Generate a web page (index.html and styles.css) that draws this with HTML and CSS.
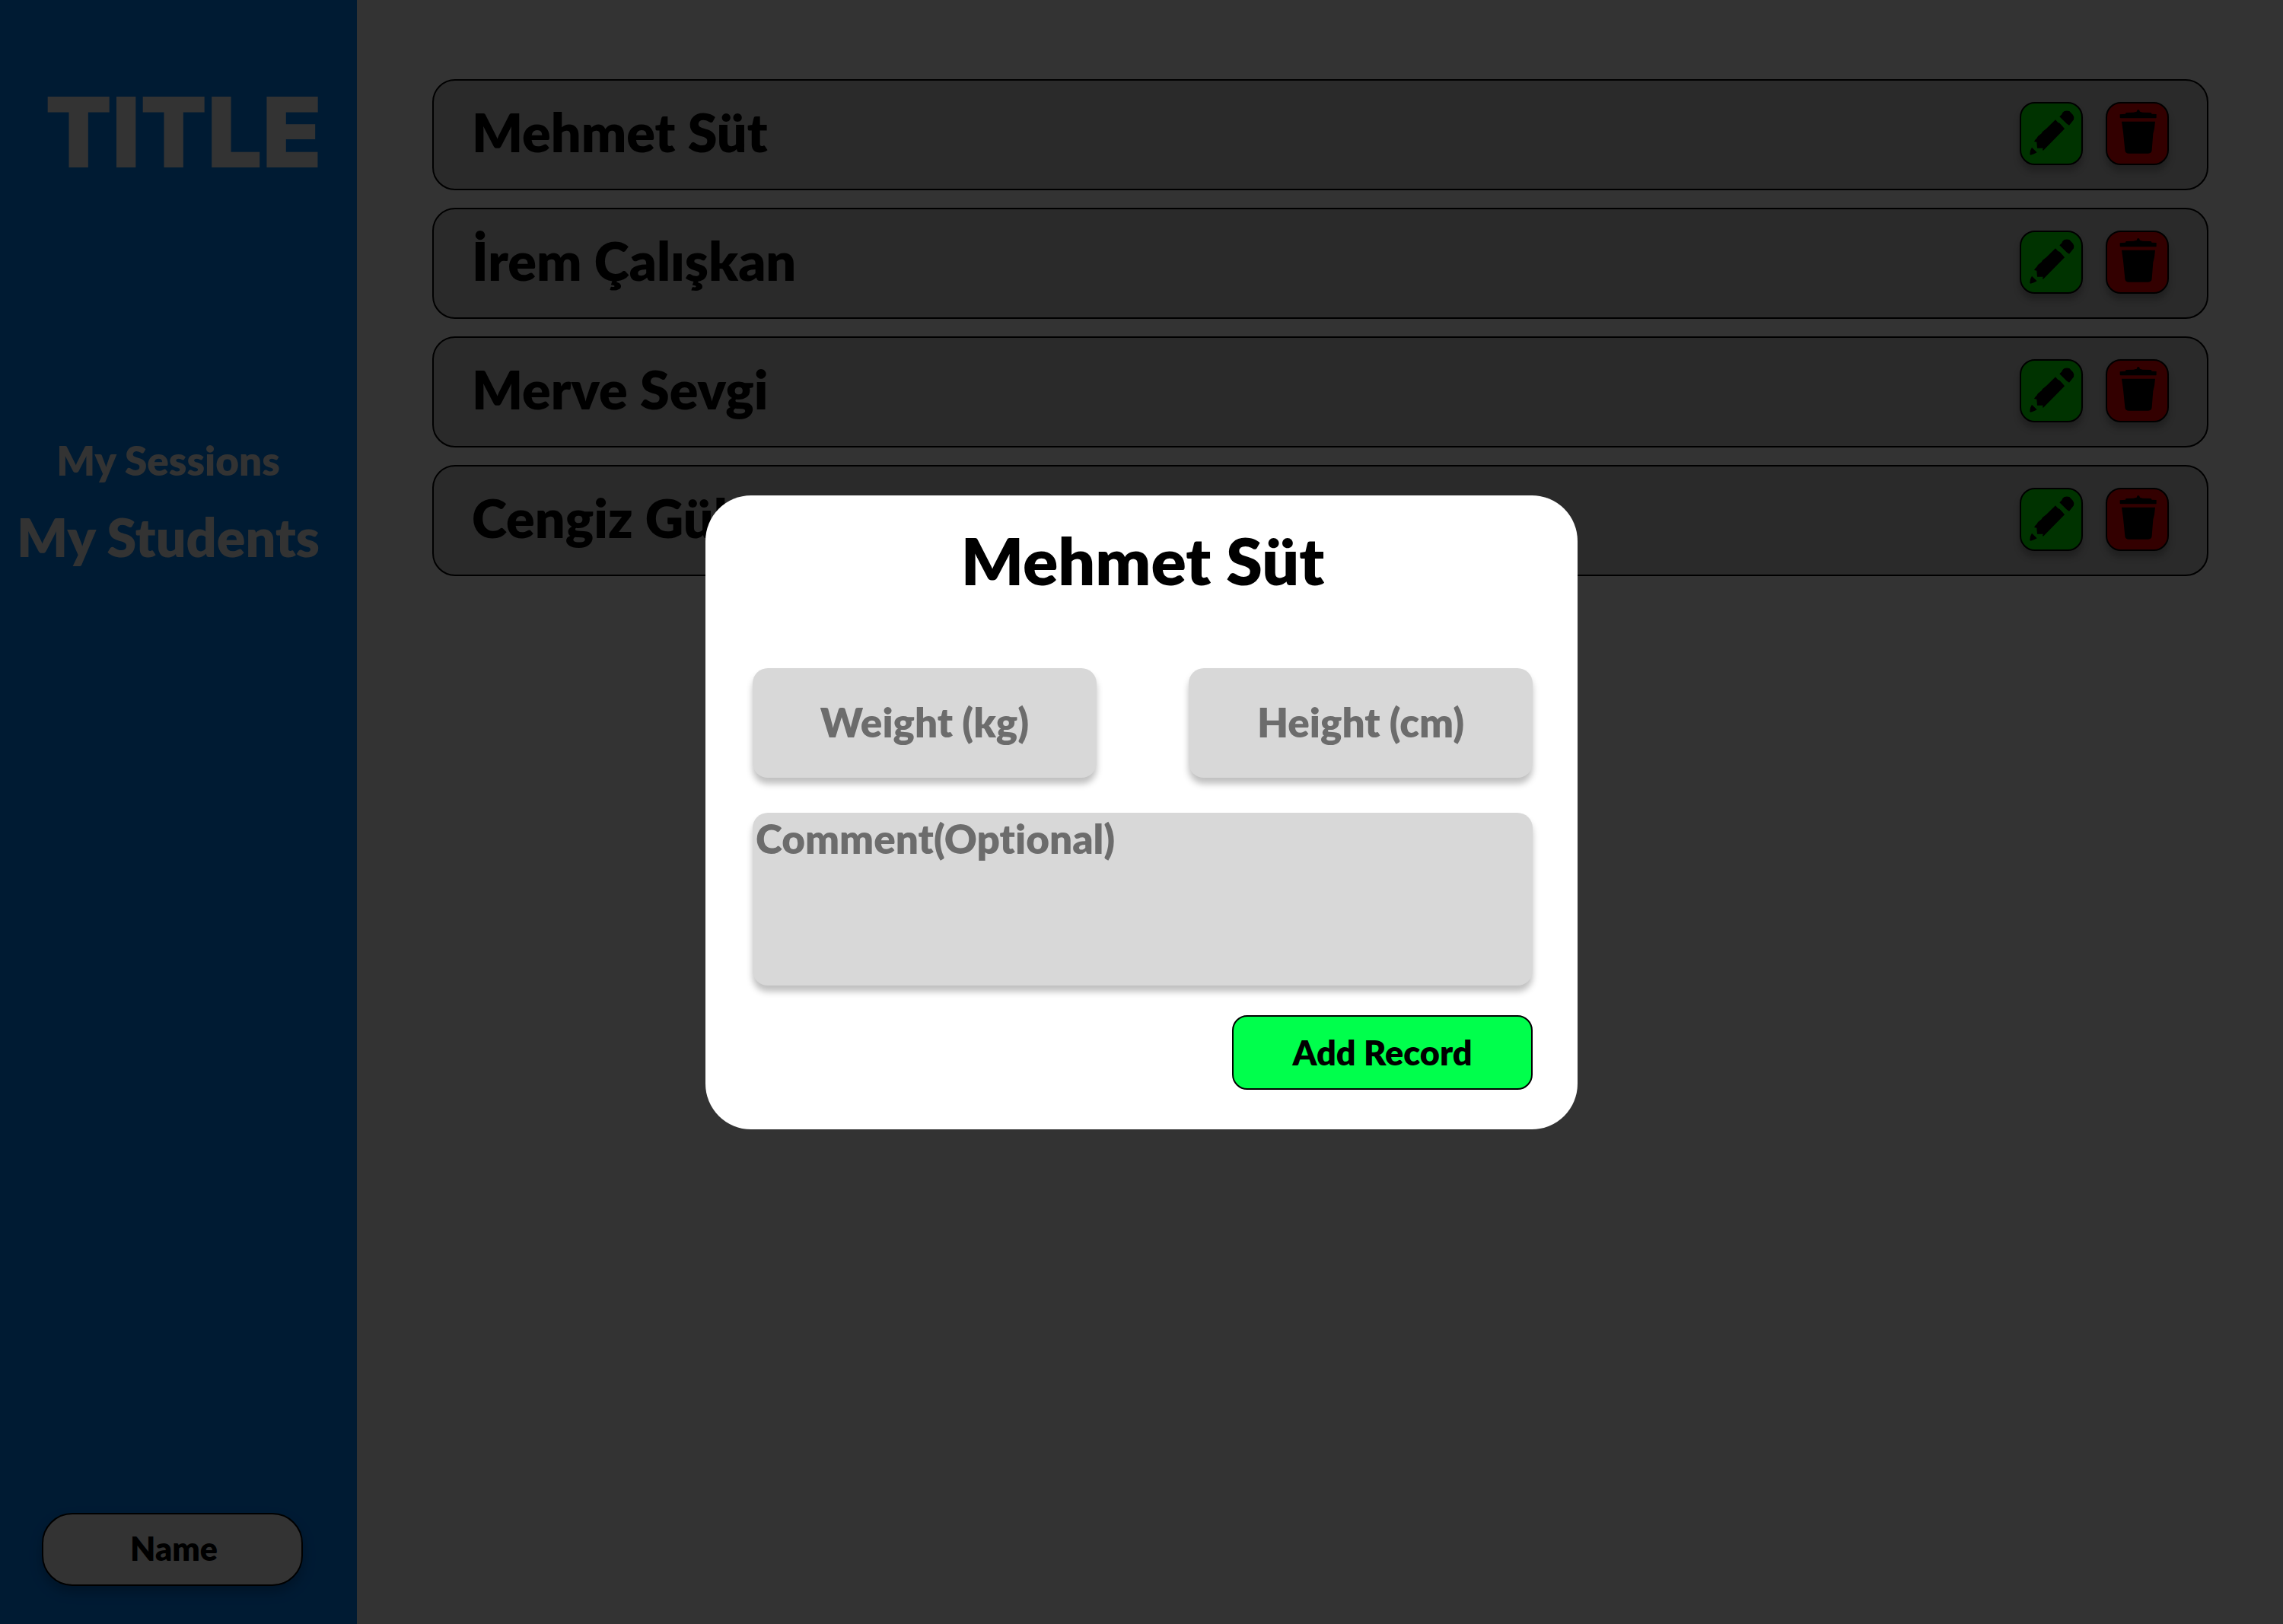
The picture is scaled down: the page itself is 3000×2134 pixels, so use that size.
FILE: index.html
```
<!DOCTYPE html>
<html lang="en">
<head>
<meta charset="utf-8">
<title>My Students</title>
<link rel="stylesheet" href="styles.css">
</head>
<body>
<svg class="sprite" aria-hidden="true">
  <symbol id="pencil" viewBox="6 6 237 237">
    <path d="M157 58L166 49Q167 41 176 36Q186 33 196 36L205 46Q213 52 214 60L213 70L195 92L186 86Z"/>
    <path d="M141 70L151 81L157 83L169 96L177 106L93 191L90 190L92 182L69 182L67 158L57 156Q60 148 67 143L72 135L86 124L90 117L105 105Z"/>
    <path d="M48 179L68 199Q57 206 43 209L40 206Q40 190 48 179Z"/>
  </symbol>
  <symbol id="trash" viewBox="6 6 237 237">
    <path d="M56 49L78 47L80 42L109 41L122 38L125 31H132L135 38L146 41L179 42L182 47L200 48V62Q199 64 195 64H60Q56 64 56 61Z"/>
    <path d="M63 77H195L192 105L187 125L182 190Q181 203 168 203H91Q77 203 76 190L69 120Z"/>
  </symbol>
</svg>

<div class="app">
  <aside class="sidebar">
    <h1 class="brand">TITLE</h1>
    <nav class="nav">
      <a class="nav-link" href="#sessions">My Sessions</a>
      <a class="nav-link nav-link-active" href="#students" aria-current="page">My Students</a>
    </nav>
    <button class="account" type="button">Name</button>
  </aside>

  <main class="content">
    <ul class="students">
      <li class="student">
        <h2 class="student-name">Mehmet Süt</h2>
        <button class="action edit" type="button" aria-label="Edit Mehmet Süt"><svg class="icon"><use href="#pencil"/></svg></button>
        <button class="action delete" type="button" aria-label="Delete Mehmet Süt"><svg class="icon"><use href="#trash"/></svg></button>
      </li>
      <li class="student">
        <h2 class="student-name">İrem Çalışkan</h2>
        <button class="action edit" type="button" aria-label="Edit İrem Çalışkan"><svg class="icon"><use href="#pencil"/></svg></button>
        <button class="action delete" type="button" aria-label="Delete İrem Çalışkan"><svg class="icon"><use href="#trash"/></svg></button>
      </li>
      <li class="student">
        <h2 class="student-name">Merve Sevgi</h2>
        <button class="action edit" type="button" aria-label="Edit Merve Sevgi"><svg class="icon"><use href="#pencil"/></svg></button>
        <button class="action delete" type="button" aria-label="Delete Merve Sevgi"><svg class="icon"><use href="#trash"/></svg></button>
      </li>
      <li class="student">
        <h2 class="student-name">Cengiz Gül</h2>
        <button class="action edit" type="button" aria-label="Edit Cengiz Gül"><svg class="icon"><use href="#pencil"/></svg></button>
        <button class="action delete" type="button" aria-label="Delete Cengiz Gül"><svg class="icon"><use href="#trash"/></svg></button>
      </li>
    </ul>
  </main>
</div>

<div class="overlay">
  <form class="modal" role="dialog" aria-modal="true" aria-labelledby="modal-title">
    <h2 class="modal-title" id="modal-title">Mehmet Süt</h2>
    <div class="measures">
      <input class="field measure" type="text" placeholder="Weight (kg)" aria-label="Weight (kg)">
      <input class="field measure" type="text" placeholder="Height (cm)" aria-label="Height (cm)">
    </div>
    <textarea class="field comment" placeholder="Comment(Optional)" aria-label="Comment (optional)"></textarea>
    <button class="submit" type="submit">Add Record</button>
  </form>
</div>
</body>
</html>
```
FILE: styles.css
```
* {
  box-sizing: border-box;
}

body {
  margin: 0;
  font-family: Lato, "Open Sans", sans-serif;
  font-weight: 800;
  font-variant-ligatures: none;
  color: #000;
  background: #fff;
}

h1,
h2,
ul {
  margin: 0;
  padding: 0;
  font-weight: inherit;
}

button,
input,
textarea {
  font: inherit;
  font-variant-ligatures: none;
  color: inherit;
}

.sprite {
  display: none;
}

.app {
  display: flex;
  min-height: 100vh;
}

/* Sidebar */
.sidebar {
  display: flex;
  flex-direction: column;
  flex: none;
  width: 469px;
  padding: 104px 0 50px;
  background: #0085ff;
}

.brand {
  padding-right: 46px;
  font-family: Inter, sans-serif;
  font-size: 128px;
  font-weight: 900;
  line-height: 140px;
  text-align: right;
  color: #fff;
}

.nav {
  display: flex;
  flex-direction: column;
  gap: 20px;
  margin-top: 321px;
  padding-right: 27px;
  text-align: center;
}

.nav-link {
  font-size: 53px;
  line-height: 80px;
  color: #fff;
  text-decoration: none;
}

.nav-link-active {
  font-size: 70px;
}

.account {
  height: 96px;
  margin: auto 71px 0 55px;
  padding: 0 0 4px 4px;
  font-size: 43px;
  background: #fff;
  border: 2px solid #000;
  border-radius: 40px;
  box-shadow: 0 8px 16px rgba(0, 0, 0, 0.25);
}

/* Student list */
.content {
  flex: 1;
  padding: 104px 98px 104px 99px;
}

.students {
  display: flex;
  flex-direction: column;
  gap: 23px;
  list-style: none;
}

.student {
  display: flex;
  align-items: flex-start;
  gap: 30px;
  padding: 28px 50px 31px 50px;
  background: #cfcfcf;
  border: 2px solid #000;
  border-radius: 30px;
}

.student-name {
  flex: 1;
  font-size: 70px;
  line-height: 78px;
}

.action {
  width: 83px;
  height: 83px;
  padding: 0;
  border: 2px solid #000;
  border-radius: 20px;
  box-shadow: 0 8px 8px rgba(0, 0, 0, 0.25);
}

.edit {
  background: #0f0;
}

.delete {
  background: #f00;
}

.icon {
  display: block;
  width: 100%;
  height: 100%;
}

/* Record dialog */
.overlay {
  position: fixed;
  inset: 0;
  display: flex;
  align-items: center;
  justify-content: center;
  background: rgba(0, 0, 0, 0.8);
}

.modal {
  display: flex;
  flex-direction: column;
  width: 1146px;
  padding: 32px 59px 52px 62px;
  background: #fff;
  border-radius: 60px;
}

.modal-title {
  font-size: 86px;
  line-height: 106px;
  text-align: center;
}

.measures {
  display: flex;
  gap: 121px;
  margin-top: 89px;
}

.field {
  font-size: 53px;
  background: #d8d8d8;
  border: 0;
  border-radius: 20px;
  box-shadow: 0 8px 8px rgba(0, 0, 0, 0.25);
}

.field::placeholder {
  color: #6c6c6c;
  opacity: 1;
}

.measure {
  flex: 1;
  min-width: 0;
  height: 144px;
  padding: 0 0 2px;
  text-align: center;
}

.comment {
  height: 227px;
  margin-top: 46px;
  padding: 2px 4px;
  line-height: 64px;
  resize: none;
}

.submit {
  align-self: flex-end;
  width: 395px;
  height: 98px;
  margin-top: 39px;
  padding: 0;
  font-size: 45px;
  background: #00ff4c;
  border: 2px solid #000;
  border-radius: 20px;
}
```
